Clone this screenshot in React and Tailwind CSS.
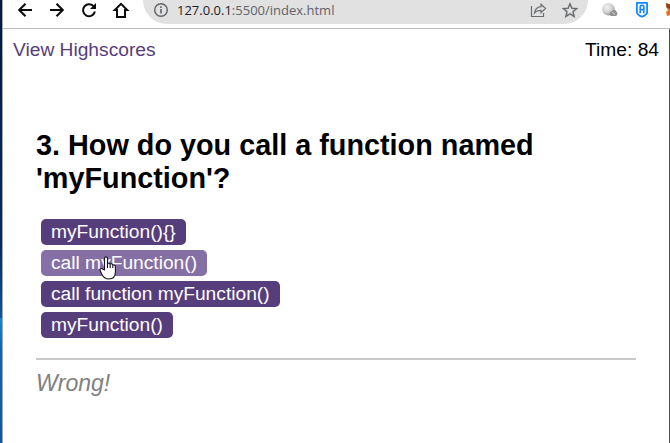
const choices = [
  { text: "myFunction(){}", width: "w-[145px]" },
  { text: "call myFunction()", width: "w-[166px]", hovered: true },
  { text: "call function myFunction()", width: "w-[239px]" },
  { text: "myFunction()", width: "w-[132px]" },
];

function Toolbar() {
  return (
    <header className="flex h-[29px] shrink-0 items-start overflow-hidden border-b border-[#bdbdbd] bg-white">
      <svg className="ml-[14px] h-5 w-[115px] shrink-0" viewBox="17 0 115 20" fill="none" stroke="#0b0b0b" strokeWidth="2">
        <path d="M32 10H19.5M25.5 3.7 19.2 10l6.3 6.3" />
        <path d="M50 10h12.5M56.5 3.7l6.3 6.3-6.3 6.3" />
        <path d="M94 6.8A6 6 0 1 0 94.9 11.5" />
        <path d="M96 3v6h-6Z" fill="#0b0b0b" stroke="none" />
        <path d="M117 17V10h-2.2L121 3.8l6.2 6.2H125v7Z" />
      </svg>
      <div className="ml-[11px] flex h-6 w-[445px] shrink-0 rounded-b-full bg-[#e1e1e1]">
        <svg className="ml-[10px] mt-[2px] h-4 w-4 shrink-0" viewBox="0 0 16 16" fill="none" stroke="#5f6368" strokeWidth="1.4">
          <circle cx="8" cy="8" r="6.3" />
          <path d="M8 7v4.5M8 4.3v1.6" strokeWidth="1.6" />
        </svg>
        <span className="ml-[8px] w-[200px] whitespace-nowrap font-['Open_Sans',sans-serif] text-[13px] leading-[20px] text-[#606368]">
          <span className="text-[#202124]">127.0.0.1</span>:5500/index.html
        </span>
        <svg className="ml-[153px] mt-px h-[18px] w-[48px] shrink-0" viewBox="530 1 48 18" fill="none" stroke="#6a6d71" strokeWidth="1.2">
          <path d="M531.5 6v10.5h12V13" />
          <path d="M541 4.3l4.5 4.2-4.5 4.2v-2.4c-3.2 0-5 .7-6.5 2.7.5-3.8 2.7-6 6.5-6.4Z" />
          <path d="m570 3.8 1.9 4.4 4.7.4-3.6 3.1 1.1 4.6-4.1-2.5-4.1 2.5 1.1-4.6-3.6-3.1 4.7-.4Z" strokeWidth="1.5" />
        </svg>
      </div>
      <svg className="ml-[12px] h-5 w-[71px] shrink-0" viewBox="600 0 71 20">
        <defs>
          <radialGradient id="pearl" cx=".4" cy=".35" r=".7">
            <stop offset="0" stopColor="#f3f3f3" />
            <stop offset=".6" stopColor="#d0d0d0" />
            <stop offset="1" stopColor="#8c8c8c" />
          </radialGradient>
        </defs>
        <circle cx="608.4" cy="9.2" r="6.2" fill="url(#pearl)" />
        <path d="M603.5 5.5l4 2" stroke="#eee" strokeWidth=".8" fill="none" />
        <path d="M609.5 14c0-2 1.5-3.2 3-3 1-1.7 3.7-1.3 4 .7 1.3.8 1.4 3.8-.7 4.3h-4.6c-1 0-1.7-.8-1.7-2Z" fill="#929292" />
        <path d="m612.5 12.5 2.5 2" stroke="#ddd" fill="none" />
        <path d="M636.9 2.9h10.2v9.3c0 2-2.4 3.4-5.1 4.6-2.7-1.2-5.1-2.6-5.1-4.6Z" fill="white" stroke="#1389fd" strokeWidth="1.8" strokeLinejoin="round" />
        <path d="M640.2 13.3V6.7q0-1.4 1.4-1.4h.8q1.4 0 1.4 1.4v6.6M640.2 9.6h3.6" stroke="#1389fd" strokeWidth="1.7" fill="none" />
        <path d="m666 3 5 2v10l-4 1-1-4 2-2-2-3Z" fill="#e27625" />
        <path d="m666 3 5 2v4l-4-1Z" fill="#80462b" />
      </svg>
    </header>
  );
}

function HandCursor() {
  return (
    <svg className="absolute left-[58px] top-[6px] h-[25px] w-[18px]" viewBox="0 0 18 25" fill="white" stroke="#171421" strokeWidth="1.1" strokeLinejoin="round">
      <path d="M5.5 14V2.5c0-2.2 3-2.2 3 0V8c.4-1.4 2.7-1.2 2.7.5.5-1.2 2.6-.9 2.6.8.8-.9 2.6-.5 2.6 1.2V16c0 4-2.2 7-6.7 7-3.8 0-5.6-2.3-7-5.1l-1.4-3c-1-2 1.1-3.2 2.4-1.8Z" />
      <path d="M8.5 8v4M11.2 8.5V12M13.8 9.3V12" />
    </svg>
  );
}

export default function App() {
  return (
    <div className="flex h-[443px] w-[670px] overflow-hidden bg-white font-['Liberation_Sans',Arial,sans-serif]">
      <aside className="w-[3px] shrink-0 border-r border-[#aaa5a2]">
        <div className="h-[318px] bg-linear-to-b from-[#001a40] via-[#002d61] via-78% to-[#0758a4]" />
        <div className="h-[125px] bg-linear-to-b from-[#078be2] via-[#0768bd] via-25% to-[#0758a5]" />
      </aside>
      <div className="flex min-w-0 flex-1 flex-col">
        <Toolbar />
        <div className="flex flex-1 flex-col border-r border-[#4d4d4d]">
          <nav className="flex h-[42px] justify-between pl-[10px] pr-[10px] pt-[10px] text-[19.2px] leading-[22px]">
            <a className="text-[#563d7c]">View Highscores</a>
            <span className="text-black">Time: 84</span>
          </nav>
          <main className="ml-[33px] w-[600px] pt-[58px]">
            <h1 className="text-[28.8px] font-bold leading-[33px] text-black">
              3. How do you call a function named<br />'myFunction'?
            </h1>
            <div className="mt-[24px] flex flex-col items-start gap-[5px] pl-[5px]">
              {choices.map(({ text, width, hovered }) => (
                <button
                  key={text}
                  className={`relative h-[26px] whitespace-nowrap rounded-[5px] pl-[10px] text-left text-[19.2px] leading-[26px] text-white ${width} ${hovered ? "bg-[#8570a5]" : "bg-[#563d7c]"}`}
                >
                  {text}
                  {hovered && <HandCursor />}
                </button>
              ))}
            </div>
            <p className="mt-[20px] border-t-2 border-[#c8c8c8] pt-[10px] text-[23.04px] italic leading-[27px] text-[#808080]">Wrong!</p>
          </main>
        </div>
      </div>
    </div>
  );
}
